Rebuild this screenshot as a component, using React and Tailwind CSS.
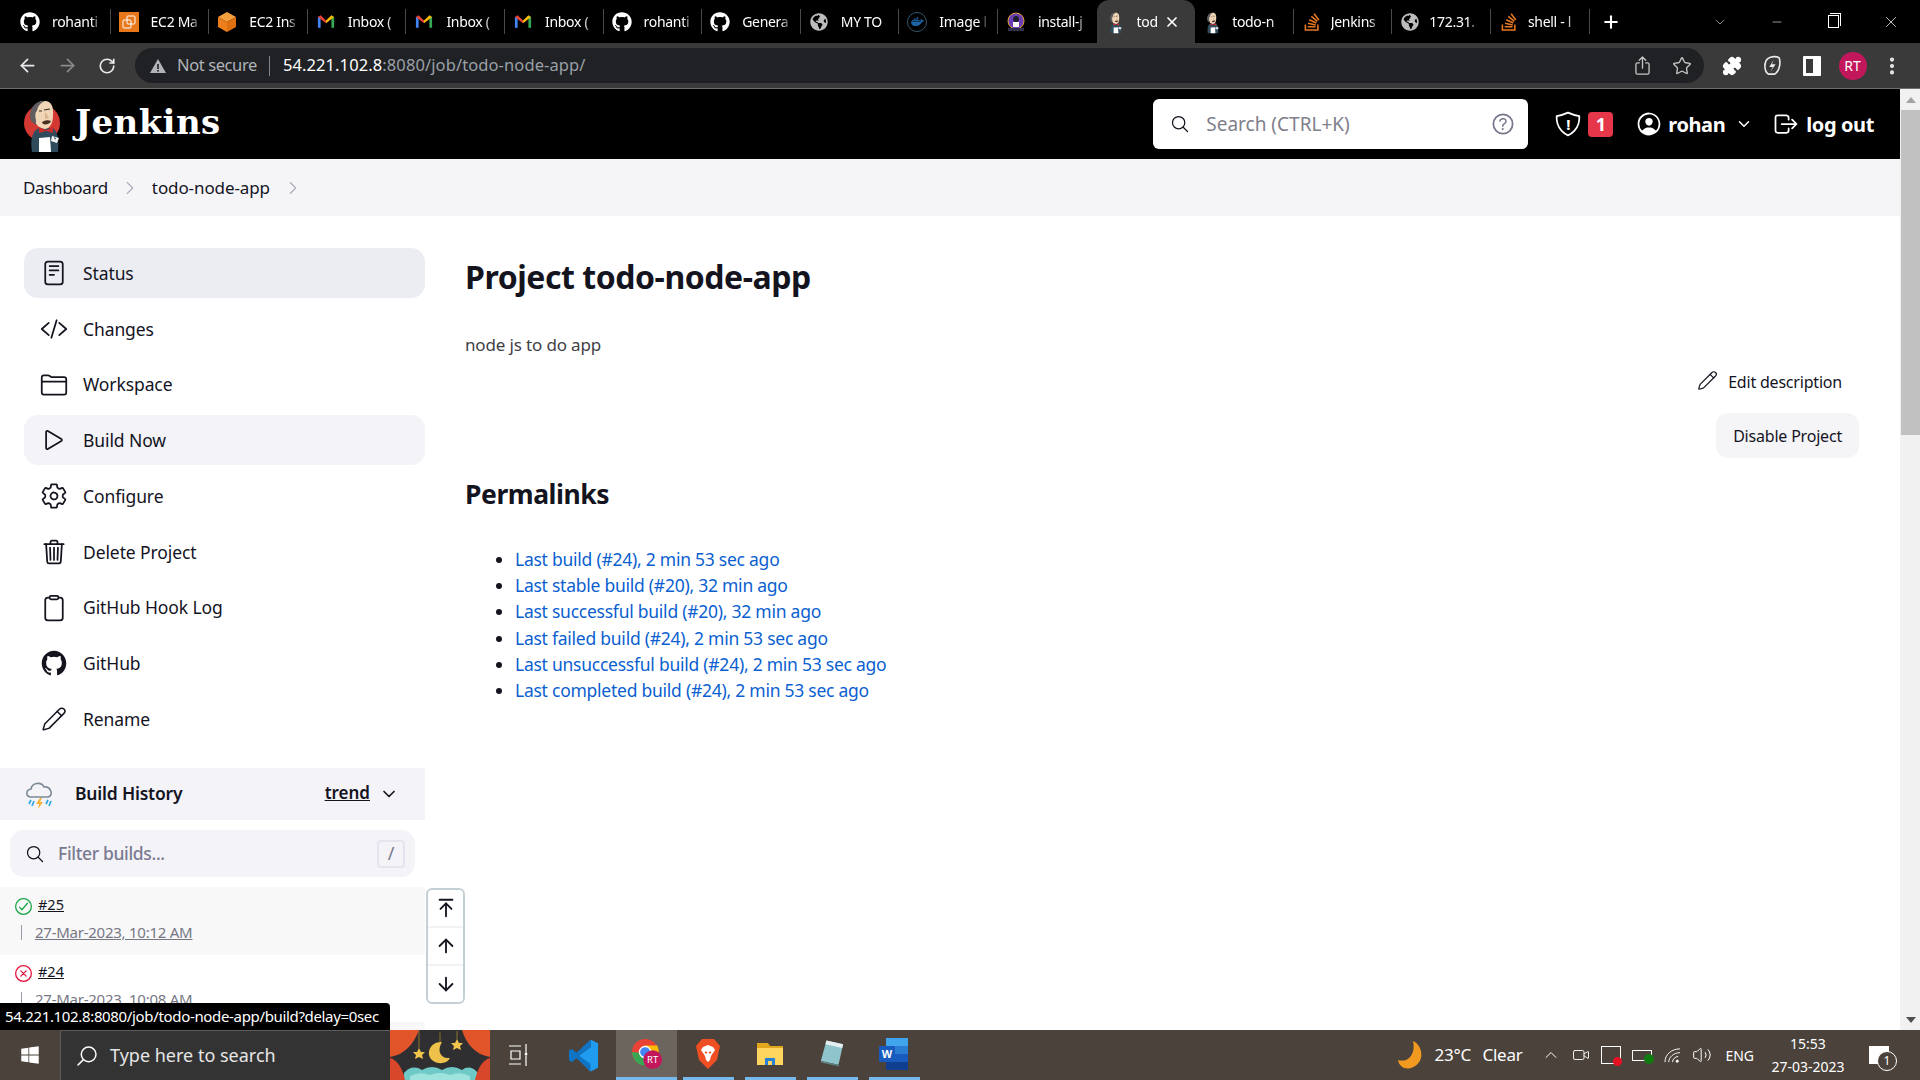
import {
  ArrowLeft, ArrowRight, RotateCw, Star, Plus, Minus, X, ChevronDown, ChevronRight, Puzzle, ArrowUpToLine, ArrowUp, ArrowDown,
  EllipsisVertical, ChevronUp, Video, Volume2, Pencil,
} from 'lucide-react';
import {
  IoReaderOutline, IoCodeSlashOutline, IoFolderOutline, IoPlayOutline, IoSettingsOutline, IoTrashOutline,
  IoClipboardOutline, IoLogoGithub, IoSearchOutline, IoHelpCircleOutline, IoPersonCircleOutline,
  IoLogOutOutline, IoCheckmarkCircleOutline, IoCloseCircleOutline, IoShieldOutline, IoShareOutline,
} from 'react-icons/io5';
import { FaGithub, FaStackOverflow, FaGlobeAmericas, FaDocker, FaWindows } from 'react-icons/fa';

const Butler = ({ className, circle = true }) => (
  <svg viewBox="0 0 60 60" className={className}>
    {circle && <circle cx="27" cy="29" r="18" fill="#d33833" />}
    <path d="M17 58 C15 46 17 37 24 34 L38 34 C43 38 44 46 43 58 Z" fill="#2f4b5c" />
    <path d="M18 18 C18 10 24 7 30 7 C36 7 39 13 38 21 C38 28 36 34 30 35 C25 35 21 31 20 27 Z" fill="#f0d6b7" />
    <path d="M16 27 C13 17 18 7 30 7 C25 9 23 12 22 17 C20 18 20 22 21 26 L21 31 Z" fill="#5f5d5f" />
    <path d="M29 16 L35 15 M24 17 L27 17" stroke="#3b2b20" strokeWidth="1.2" />
    <path d="M30 18 L34 24 L30 25 Z" fill="#d9b48f" />
    <path d="M27 28 C30 26 34 26 36 27 C35 30 31 31 28 30 Z" fill="#4a2f22" />
    <path d="M24 33 L31 36 L38 33 L38 39 L31 37 L24 39 Z" fill="#cc2b2b" />
    <path d="M24 44 L35 43 L36 58 L24 58 Z" fill="#fff" />
    <path d="M37 42 L44 44 L42 49 L36 47 Z" fill="#f4f4f4" />
    <path d="M39 43 L41 44 L40 46 Z" fill="#2f4b5c" />
  </svg>
);

const GmailIcon = () => (
  <svg viewBox="0 0 20 16" className="w-[18px] h-[15px]">
    <path d="M1 15 L1 3 L4 3 L4 15 Z" fill="#4285f4" />
    <path d="M16 15 L16 3 L19 3 L19 15 Z" fill="#34a853" />
    <path d="M1 3 L4 1 L10 7 L10 10 Z" fill="#ea4335" />
    <path d="M19 3 L16 1 L10 7 L10 10 Z" fill="#fbbc04" />
  </svg>
);

const Ec2Square = () => (
  <svg viewBox="0 0 20 20" className="w-[20px] h-[20px]">
    <rect width="20" height="20" fill="#e8761a" />
    <rect x="8" y="4" width="8" height="8" rx="1" fill="none" stroke="#fff" strokeWidth="1" />
    <rect x="4" y="8" width="8" height="8" rx="1" fill="none" stroke="#fff" strokeWidth="1" />
  </svg>
);

const Cube = () => (
  <svg viewBox="0 0 20 20" className="w-[20px] h-[20px]">
    <path d="M10 0 L19 5 L10 10 L1 5 Z" fill="#f6a03d" />
    <path d="M1 5 L10 10 L10 20 L1 15 Z" fill="#ec7f1c" />
    <path d="M19 5 L10 10 L10 20 L19 15 Z" fill="#e0700f" />
  </svg>
);

const InstallIcon = () => (
  <svg viewBox="0 0 20 20" className="w-[20px] h-[20px]">
    <circle cx="10" cy="9" r="8" fill="#6b3fb5" stroke="#e0a030" strokeWidth="1" />
    <circle cx="10" cy="7" r="3" fill="#1e1e2a" />
    <rect x="7" y="10" width="6" height="5" fill="#fff" />
    <rect x="2" y="16" width="16" height="3" fill="#30304a" />
  </svg>
);

const tabs = [
  { label: 'rohanti', icon: <FaGithub className="text-white w-[20px] h-[20px]" /> },
  { label: 'EC2 Ma', icon: <Ec2Square /> },
  { label: 'EC2 Ins', icon: <Cube /> },
  { label: 'Inbox (', icon: <GmailIcon /> },
  { label: 'Inbox (', icon: <GmailIcon /> },
  { label: 'Inbox (', icon: <GmailIcon /> },
  { label: 'rohanti', icon: <FaGithub className="text-white w-[20px] h-[20px]" /> },
  { label: 'Genera', icon: <FaGithub className="text-white w-[20px] h-[20px]" /> },
  { label: 'MY TO', icon: <FaGlobeAmericas className="text-[#bdbdbd] w-[18px] h-[18px]" /> },
  {
    label: 'Image l',
    icon: (
      <span className="w-[20px] h-[20px] rounded-full border border-[#36566b] flex items-center justify-center">
        <FaDocker className="text-[#1d63a8] w-[13px] h-[13px]" />
      </span>
    ),
  },
  { label: 'install-j', icon: <InstallIcon /> },
  { label: 'tod', icon: <Butler className="w-[26px] h-[26px]" circle={false} />, active: true },
  { label: 'todo-n', icon: <Butler className="w-[26px] h-[26px]" circle={false} /> },
  { label: 'Jenkins', icon: <FaStackOverflow className="text-[#e87922] w-[20px] h-[20px]" /> },
  { label: '172.31.', icon: <FaGlobeAmericas className="text-[#bdbdbd] w-[18px] h-[18px]" /> },
  { label: 'shell - l', icon: <FaStackOverflow className="text-[#e87922] w-[20px] h-[20px]" /> },
];

const sideItems = [
  { label: 'Status', icon: IoReaderOutline, cls: 'bg-[#ecedf2]' },
  { label: 'Changes', icon: IoCodeSlashOutline },
  { label: 'Workspace', icon: IoFolderOutline },
  { label: 'Build Now', icon: IoPlayOutline, cls: 'bg-[#f3f3f8]' },
  { label: 'Configure', icon: IoSettingsOutline },
  { label: 'Delete Project', icon: IoTrashOutline },
  { label: 'GitHub Hook Log', icon: IoClipboardOutline },
  { label: 'GitHub', icon: IoLogoGithub },
  { label: 'Rename', icon: Pencil, thin: true },
];

const permalinks = [
  'Last build (#24), 2 min 53 sec ago',
  'Last stable build (#20), 32 min ago',
  'Last successful build (#20), 32 min ago',
  'Last failed build (#24), 2 min 53 sec ago',
  'Last unsuccessful build (#24), 2 min 53 sec ago',
  'Last completed build (#24), 2 min 53 sec ago',
];

const TabBar = () => (
  <div className="h-[43px] bg-black flex items-stretch pl-[12px] shrink-0">
    {tabs.map((tab, i) => (
      <div
        key={i}
        className={
          tab.active
            ? 'w-[98.6px] h-[43px] bg-[#3a3a3a] rounded-t-[12px] flex items-center pl-[9px] gap-[9px] text-white'
            : i > 11
              ? 'w-[98.6px] h-[43px] flex items-center pl-[8px] gap-[7px] text-white relative'
              : 'w-[98.6px] h-[43px] flex items-center pl-[8px] gap-[10px] text-white relative'
        }
      >
        <span className="w-[24px] h-[24px] flex items-center justify-center shrink-0 -ml-[2px]">{tab.icon}</span>
        <span className="text-[14px] tracking-[-0.3px] whitespace-nowrap overflow-hidden w-[50px] [mask-image:linear-gradient(to_right,#000_78%,transparent)]">{tab.label}</span>
        {tab.active && <X className="w-[16px] h-[16px] -ml-[32px] shrink-0" strokeWidth={2.5} />}
        {!tab.active && !tabs[i + 1]?.active && (
          <span className="absolute right-0 top-[9px] h-[25px] w-px bg-[#4a4a4a]" />
        )}
      </div>
    ))}
    <div className="w-[42px] flex items-center justify-center text-white">
      <Plus className="w-[20px] h-[20px]" strokeWidth={2.5} />
    </div>
    <div className="ml-auto flex text-white">
      <div className="w-[57px] flex items-center justify-center">
        <ChevronDown className="w-[16px] h-[16px] text-[#c8c8c8]" strokeWidth={1} />
      </div>
      <div className="w-[57px] flex items-center justify-center">
        <Minus className="w-[14px] h-[14px]" strokeWidth={1} />
      </div>
      <div className="w-[57px] flex items-center justify-center">
        <span className="relative w-[11px] h-[13px] border border-white block after:absolute after:content-[''] after:-top-[3px] after:-right-[3px] after:w-[11px] after:h-[13px] after:border-t after:border-r after:border-white" />
      </div>
      <div className="w-[58px] flex items-center justify-center">
        <X className="w-[18px] h-[18px]" strokeWidth={1} />
      </div>
    </div>
  </div>
);

const ToolBar = () => (
  <div className="h-[46px] bg-[#3a3a3a] border-b border-[#6e6e6e] flex items-center pl-[7px] shrink-0 text-[#e8eaed]">
    <div className="w-[40px] flex justify-center"><ArrowLeft className="w-[21px] h-[21px]" strokeWidth={2} /></div>
    <div className="w-[40px] flex justify-center"><ArrowRight className="w-[21px] h-[21px] text-[#8a8a8a]" strokeWidth={2} /></div>
    <div className="w-[40px] flex justify-center"><RotateCw className="w-[18px] h-[18px]" strokeWidth={2.2} /></div>
    <div className="ml-[8px] w-[1569px] h-[35px] rounded-full bg-[#202124] flex items-center pl-[15px] pr-[12px] text-[16.5px]">
      <svg viewBox="0 0 16 14" className="w-[16px] h-[14px] shrink-0">
        <path d="M8 0 L16 14 L0 14 Z" fill="#b0b3b8" />
        <rect x="7.2" y="5" width="1.6" height="5" fill="#202124" />
        <rect x="7.2" y="11" width="1.6" height="1.6" fill="#202124" />
      </svg>
      <span className="ml-[11px] text-[#b0b3b8] tracking-[-0.4px] whitespace-nowrap">Not secure</span>
      <span className="ml-[12px] w-px h-[20px] bg-[#80868b]" />
      <span className="ml-[13px] whitespace-nowrap tracking-[0.1px]">
        <span className="text-white">54.221.102.8</span>
        <span className="text-[#9aa0a6]">:8080/job/todo-node-app/</span>
      </span>
      <div className="ml-auto flex items-center gap-[19px] text-[#c4c7c5]">
        <IoShareOutline className="w-[21px] h-[21px]" />
        <Star className="w-[20px] h-[20px]" strokeWidth={1.6} />
      </div>
    </div>
    <div className="ml-[8px] w-[40px] flex justify-center"><Puzzle className="w-[20px] h-[20px] fill-white text-white" /></div>
    <div className="w-[40px] flex justify-center">
      <svg viewBox="0 0 20 24" className="w-[18px] h-[22px]" fill="none" stroke="#e8eaed" strokeWidth="1.8">
        <path d="M6 21 C1 18 1 8 5 4 C9 1 15 1 18 3 C20 9 18 18 13 21 Z" />
        <path d="M12 5 L7 13 L11 13 L8 19 L14 10 L10 10 Z" fill="#e8eaed" stroke="none" />
      </svg>
    </div>
    <div className="w-[40px] flex justify-center">
      <span className="w-[18px] h-[20px] border-[3px] border-white border-r-[8px] block rounded-[1px]" />
    </div>
    <div className="w-[40px] flex justify-center pl-[1px]">
      <span className="w-[28px] h-[28px] rounded-full bg-[#c2185b] text-white text-[14px] flex items-center justify-center">RT</span>
    </div>
    <div className="w-[40px] flex justify-center"><EllipsisVertical className="w-[22px] h-[22px]" strokeWidth={2.5} /></div>
  </div>
);

const JenkinsHeader = () => (
  <div className="h-[70px] bg-black flex items-center pl-[15px] pr-[26px] text-white shrink-0">
    <Butler className="w-[60px] h-[60px] shrink-0" />
    <span className="font-['DejaVu_Serif',serif] font-bold text-[34px] tracking-[0.4px] leading-none -mt-[4px]">Jenkins</span>
    <div className="ml-auto w-[375px] h-[50px] bg-white rounded-[6px] flex items-center pl-[17px] pr-[11px] text-[#80808c]">
      <IoSearchOutline className="w-[20px] h-[20px] text-[#14141f]" />
      <span className="ml-[16px] mt-[1px] text-[19px]">Search (CTRL+K)</span>
      <IoHelpCircleOutline className="ml-auto w-[28px] h-[28px] text-[#77778c]" />
    </div>
    <span className="relative ml-[26px] w-[28px] h-[28px] flex items-center justify-center">
      <IoShieldOutline className="w-[28px] h-[28px]" />
      <span className="absolute text-[15px] font-bold leading-none">!</span>
    </span>
    <span className="ml-[6px] w-[25px] h-[25px] rounded-[4px] bg-[#e6364a] text-[18px] font-bold flex items-center justify-center">1</span>
    <IoPersonCircleOutline className="ml-[22px] w-[28px] h-[28px]" />
    <span className="ml-[5px] mt-[1px] text-[20px] font-bold tracking-[-0.4px]">rohan</span>
    <ChevronDown className="ml-[10px] w-[18px] h-[18px]" strokeWidth={2} />
    <IoLogOutOutline className="ml-[19px] w-[28px] h-[28px]" />
    <span className="ml-[6px] mt-[1px] text-[20px] font-bold tracking-[-0.4px] whitespace-nowrap">log out</span>
  </div>
);

const Breadcrumb = () => (
  <div className="h-[57px] bg-[#f5f5f8] flex items-center pl-[23px] text-[17px] tracking-[-0.35px] text-[#14141f] shrink-0">
    <span>Dashboard</span>
    <ChevronRight className="mx-[11px] w-[22px] h-[22px] text-[#a9a9bd]" strokeWidth={1.2} />
    <span className="tracking-[-0.1px]">todo-node-app</span>
    <ChevronRight className="ml-[12px] w-[22px] h-[22px] text-[#a9a9bd]" strokeWidth={1.2} />
  </div>
);

const BuildRow = ({ num, date, ok, shade }) => (
  <div className={shade ? 'h-[68px] bg-[#f8f8f9] pl-[13px] pt-[7px]' : 'h-[67px] pl-[13px] pt-[6px]'}>
    <div className="flex items-center h-[22px] mt-[1px]">
      {ok ? (
        <IoCheckmarkCircleOutline className="w-[21px] h-[21px] text-[#1ea64b]" />
      ) : (
        <IoCloseCircleOutline className="w-[21px] h-[21px] text-[#e6143c]" />
      )}
      <span className="ml-[4px] text-[14.5px] underline text-[#14141f] -mt-[3px]">{num}</span>
    </div>
    <div className="flex items-center mt-[7px] h-[16px] pl-[8px]">
      <span className="w-px h-[15px] bg-[#9a9aa8]" />
      <span className="ml-[13px] text-[15px] tracking-[-0.25px] underline text-[#777784] whitespace-nowrap">{date}</span>
    </div>
  </div>
);

const Sidebar = () => (
  <aside className="w-[425px] shrink-0 pt-[32px]">
    <nav className="pl-[24px]">
      {sideItems.map((item) => {
        const Icon = item.icon;
        return (
          <div key={item.label} className={`h-[50px] mb-[5.75px] rounded-[14px] flex items-center text-[#14141f] ${item.cls || ''}`}>
            <span className="w-[59px] flex justify-center">
              {item.thin ? <Icon className="w-[26px] h-[26px]" strokeWidth={1.4} /> : <Icon className="w-[28px] h-[28px]" />}
            </span>
            <span className="text-[17.5px] tracking-[-0.1px]">{item.label}</span>
          </div>
        );
      })}
    </nav>
    <div className="mt-[24px] h-[52px] bg-[#f3f3f8] flex items-center pl-[25px] text-[#14141f]">
      <svg viewBox="0 0 30 30" className="w-[30px] h-[30px] shrink-0">
        <path d="M6 18 C1 18 0 11 6 10 C7 4 16 2 19 8 C26 7 29 17 23 18 Z" fill="none" stroke="#7d8a96" strokeWidth="1.6" />
        <path d="M15 19 L11 25 L14 25 L13 30 L18 23 L15 23 L17 19 Z" fill="#f5b335" />
        <path d="M6 21 L4 25 M9 22 L7 27 M23 21 L21 25 M26 22 L24 27" stroke="#2fa8e0" strokeWidth="1.7" />
      </svg>
      <span className="ml-[20px] -mt-[2px] text-[17.5px] font-semibold tracking-[-0.2px]">Build History</span>
      <span className="ml-auto -mt-[2px] text-[17px] font-semibold underline">trend</span>
      <ChevronDown className="ml-[9px] mr-[26px] w-[20px] h-[20px]" strokeWidth={2} />
    </div>
    <div className="mt-[10px] mx-[10px] h-[47px] bg-[#f3f3f8] rounded-[14px] flex items-center pl-[15px] pr-[10px]">
      <IoSearchOutline className="w-[20px] h-[20px] text-[#14141f]" />
      <span className="ml-[13px] text-[17.5px] tracking-[-0.35px] font-medium text-[#7a7a90]">Filter builds...</span>
      <span className="ml-auto w-[28px] h-[28px] rounded-[4px] border-2 border-[#e4e4ee] text-[#77778c] flex items-center justify-center text-[18px]">/</span>
    </div>
    <div className="mt-[10px]">
      <BuildRow num="#25" date="27-Mar-2023, 10:12 AM" ok shade />
      <BuildRow num="#24" date="27-Mar-2023, 10:08 AM" />
      <div className="h-[68px] bg-[#f8f8f9]" />
    </div>
  </aside>
);

const Content = () => (
  <main className="flex-1 pl-[40px] pr-[41px] pt-[39px] text-[#14141f]">
    <h1 className="text-[32px] leading-[44px] font-bold tracking-[-0.45px]">Project todo-node-app</h1>
    <p className="mt-[34px] text-[17px] leading-[24px] tracking-[-0.15px] text-[#3f3f46]">node js to do app</p>
    <div className="flex flex-col items-end">
      <div className="mt-[13px] h-[24px] flex items-center pr-[17px]">
        <Pencil className="w-[21px] h-[21px] -mt-[4px]" strokeWidth={1.4} />
        <span className="ml-[10px] text-[16px] tracking-[-0.2px]">Edit description</span>
      </div>
      <div className="mt-[19px] h-[45px] px-[17px] rounded-[12px] bg-[#f5f5f8] flex items-center text-[16px] tracking-[-0.2px]">Disable Project</div>
    </div>
    <h2 className="mt-[19px] text-[26.5px] leading-[34px] font-bold tracking-[-0.45px]">Permalinks</h2>
    <ul className="mt-[35px] list-disc pl-[50px] text-[17.5px] leading-[26.2px] tracking-[-0.25px]">
      {permalinks.map((link) => (
        <li key={link}><span className="text-[#0b5fd0]">{link}</span></li>
      ))}
    </ul>
  </main>
);

const Wallpaper = () => (
  <svg viewBox="0 0 100 50" className="w-[100px] h-[50px] shrink-0">
    <rect width="100" height="50" fill="#2f2f31" />
    <path d="M13 0 V18 M29 0 V18 M50 0 V12 M67 0 V9" stroke="#b8922e" strokeWidth="0.7" />
    <path d="M14 43 Q22 34 32 40 Q42 34 52 40 Q62 34 72 40 Q80 34 88 43 L88 50 L14 50 Z" fill="#6fc9c6" />
    <path d="M20 46 Q30 41 40 45 Q50 41 60 45 Q70 41 80 46 L80 50 L20 50 Z" fill="#9ee3dd" />
    <path d="M0 0 L29 0 C24 14 14 25 0 27 Z" fill="#e2552b" />
    <path d="M100 0 L72 0 C76 14 86 25 100 27 Z" fill="#e2552b" />
    <path d="M0 28 C8 30 13 40 15 50 L0 50 Z" fill="#d9472a" />
    <path d="M100 28 C92 30 87 40 85 50 L100 50 Z" fill="#d9472a" />
    <path d="M29 0 Q50 5 72 0 Z" fill="#2f2f31" />
    <path d="M52 12 C41 11 35 23 42 30 C48 35 57 34 60 28 C52 29 46 22 52 12 Z" fill="#eec14a" />
    <path d="M29 18 L31 22 L35 22 L32 25 L33 29 L29 27 L25 29 L26 25 L23 22 L27 22 Z" fill="#f2c64b" />
    <path d="M67 9 L69 13 L73 13 L70 16 L71 20 L67 18 L63 20 L64 16 L61 13 L65 13 Z" fill="#f2c64b" />
  </svg>
);

const TaskItem = ({ children, active }) => (
  <div
    className={
      active
        ? 'w-[61px] h-[50px] bg-[#6b655e] border-b-[3px] border-[#76b9ed] flex items-center justify-center shrink-0'
        : 'w-[51px] h-[50px] mx-[5.5px] border-b-[3px] border-[#76b9ed] flex items-center justify-center shrink-0'
    }
  >
    {children}
  </div>
);

const TaskBar = () => (
  <div className="h-[50px] bg-[#4a423b] flex items-stretch text-white shrink-0">
    <div className="w-[60px] flex items-center justify-center">
      <FaWindows className="w-[20px] h-[20px]" />
    </div>
    <div className="w-[330px] bg-[#333333] border-l border-t border-[#5c5c5c] flex items-center pl-[14px]">
      <IoSearchOutline className="w-[24px] h-[24px] -scale-x-100" />
      <span className="ml-[11px] text-[18px] text-[#e6e6e6]">Type here to search</span>
    </div>
    <Wallpaper />
    <div className="w-[58px] flex items-center justify-center shrink-0">
      <svg viewBox="0 0 20 24" className="w-[20px] h-[24px]" fill="none" stroke="#fff" strokeWidth="1.2">
        <path d="M0 3 H12 M0 21 H12 M2 8 H11 V16 H2 Z M17 1 V9 M17 13 V23" />
        <rect x="15.8" y="9.5" width="2.4" height="3" fill="#fff" stroke="none" />
      </svg>
    </div>
    <div className="w-[68px] flex items-center justify-center shrink-0 pl-[3px]">
      <svg viewBox="0 0 32 36" className="w-[30px] h-[35px]">
        <path d="M23 1 L31 5 L31 31 L23 35 L8 20 L23 9 Z" fill="#1f9cf0" />
        <path d="M23 9 L8 20 L3 25 L0 23 L0 13 L3 11 L8 15 L23 1 Z" fill="#0f74c4" />
        <path d="M23 27 L8 16 L3 11 L0 13 L0 23 L3 25 L8 21 L23 35 Z" fill="#0f74c4" />
      </svg>
    </div>
    <TaskItem active>
      <svg viewBox="0 0 34 34" className="w-[32px] h-[32px]">
        <circle cx="15" cy="15" r="14" fill="#ea4335" />
        <path d="M3 22 A14 14 0 0 0 15 29 L21 18 L10 16 Z" fill="#34a853" />
        <path d="M1 15 A14 14 0 0 0 3 22 L10 16 Z" fill="#34a853" />
        <path d="M28 8 A14 14 0 0 1 29 17 L15 29 L20 15 L15 8 Z" fill="#fbbc04" />
        <circle cx="15" cy="15" r="6" fill="#4285f4" stroke="#fff" strokeWidth="1.5" />
        <circle cx="23" cy="23" r="10" fill="#c2185b" />
        <text x="23" y="27" textAnchor="middle" fontSize="10" fill="#fff" fontFamily="Noto Sans, sans-serif">RT</text>
      </svg>
    </TaskItem>
    <TaskItem>
      <svg viewBox="0 0 26 32" className="w-[26px] h-[32px]">
        <path d="M7 1 H19 L25 8 L22 22 L13 31 L4 22 L1 8 Z" fill="#f04e23" />
        <path d="M8 9 L13 7 L18 9 L20 12 L16 18 L15 22 L13 24 L11 22 L10 18 L6 12 Z" fill="#fff" />
        <path d="M10 14 L12 15 M16 14 L14 15" stroke="#f04e23" strokeWidth="1.5" />
      </svg>
    </TaskItem>
    <TaskItem>
      <svg viewBox="0 0 28 28" className="w-[28px] h-[28px]">
        <path d="M1 3 H12 L14 6 H27 V25 H1 Z" fill="#e2a71c" />
        <rect x="1" y="8" width="26" height="17" fill="#fdd55f" />
        <path d="M9 18 H19 V25 H16 V21 H12 V25 H9 Z" fill="#2a7fd4" />
      </svg>
    </TaskItem>
    <TaskItem>
      <svg viewBox="0 0 28 32" className="w-[26px] h-[31px]">
        <path d="M8 2 L26 6 L21 28 L2 24 Z" fill="#8fc4cc" />
        <path d="M2 24 L21 28 L22 30 L3 26 Z" fill="#5f7f84" />
        <path d="M8 2 L26 6 L25 10 L7 6 Z" fill="#e6eef0" />
      </svg>
    </TaskItem>
    <TaskItem>
      <svg viewBox="0 0 30 34" className="w-[30px] h-[34px]">
        <rect x="7" y="1" width="22" height="8" fill="#41a5ee" />
        <rect x="7" y="9" width="22" height="8" fill="#2b7cd3" />
        <rect x="7" y="17" width="22" height="8" fill="#185abd" />
        <rect x="7" y="25" width="22" height="8" fill="#103f91" />
        <rect x="0" y="9" width="16" height="16" rx="1" fill="#185abd" />
        <text x="8" y="21" textAnchor="middle" fontSize="11" fontWeight="700" fill="#fff" fontFamily="Liberation Sans, sans-serif">W</text>
      </svg>
    </TaskItem>
    <div className="ml-auto flex items-center pr-[31px]">
      <svg viewBox="0 0 26 30" className="w-[26px] h-[30px] shrink-0">
        <path d="M15 1 C26 6 27 24 13 28 C6 30 1 26 0 20 C10 23 18 14 15 1 Z" fill="#f29a1f" />
      </svg>
      <span className="ml-[10px] w-[48px] text-[17px] tracking-[-0.2px] whitespace-nowrap">23°C</span>
      <span className="w-[59px] text-[17px] tracking-[-0.2px]">Clear</span>
      <ChevronUp className="w-[20px] h-[20px]" strokeWidth={1.2} />
      <Video className="ml-[11px] w-[18px] h-[18px]" strokeWidth={1.2} />
      <span className="relative ml-[11px] w-[20px] h-[18px] border border-white block">
        <span className="absolute -right-[2px] -bottom-[3px] w-[9px] h-[9px] rounded-full bg-[#e81123]" />
      </span>
      <span className="relative ml-[11px] w-[20px] h-[11px] border border-white block">
        <span className="absolute -right-[3px] -bottom-[4px] w-[10px] h-[10px] rounded-full bg-[#107c10]" />
      </span>
      <svg viewBox="0 0 18 18" className="ml-[12px] w-[17px] h-[17px]" fill="none" stroke="#fff" strokeWidth="1">
        <path d="M1 16 C1 8 8 2 17 2 M5 16 C5 11 10 6 17 6 M9 16 C9 13 12 10 15 10" />
        <circle cx="14" cy="15" r="1.2" fill="#fff" />
      </svg>
      <Volume2 className="ml-[11px] w-[20px] h-[20px]" strokeWidth={1.2} />
      <span className="ml-[13px] text-[14px]">ENG</span>
      <div className="ml-[14px] w-[80px] flex flex-col items-center text-[14px] leading-[23px]">
        <span>15:53</span>
        <span>27-03-2023</span>
      </div>
      <span className="relative ml-[21px] w-[20px] h-[18px] bg-white block">
        <span className="absolute -right-[8px] -bottom-[7px] w-[20px] h-[20px] rounded-full bg-[#4a423b] border border-white text-[12px] leading-[18px] text-center">1</span>
      </span>
    </div>
  </div>
);

const Scrollbar = () => (
  <div className="w-[20px] bg-[#f1f1f1] pl-[1px] flex flex-col shrink-0 items-stretch">
    <div className="h-[21px] flex items-center justify-center">
      <span className="w-0 h-0 border-x-[5px] border-x-transparent border-b-[6px] border-b-[#a3a3a3]" />
    </div>
    <div className="h-[325px] bg-[#c1c1c1]" />
    <div className="flex-1" />
    <div className="h-[21px] flex items-center justify-center">
      <span className="w-0 h-0 border-x-[5px] border-x-transparent border-t-[6px] border-t-[#505050]" />
    </div>
  </div>
);

export default function App() {
  return (
    <div className="relative w-[1920px] h-[1080px] overflow-hidden flex flex-col bg-white font-['Noto_Sans',sans-serif]">
      <TabBar />
      <ToolBar />
      <div className="flex-1 min-h-0 flex">
        <div className="flex-1 min-w-0 flex flex-col overflow-hidden">
          <JenkinsHeader />
          <Breadcrumb />
          <div className="flex-1 min-h-0 flex overflow-hidden">
            <Sidebar />
            <Content />
          </div>
        </div>
        <Scrollbar />
      </div>
      <TaskBar />

      {/* floating scroll buttons */}
      <div className="absolute left-[426px] top-[888px] w-[39px] h-[116px] bg-white border-2 border-[#c5d0d6] rounded-[6px] flex flex-col text-[#14141f]">
        <div className="flex-1 flex items-center justify-center border-b-2 border-[#f0f2f4]"><ArrowUpToLine className="w-[22px] h-[22px]" strokeWidth={2} /></div>
        <div className="flex-1 flex items-center justify-center border-b-2 border-[#f0f2f4]"><ArrowUp className="w-[22px] h-[22px]" strokeWidth={2} /></div>
        <div className="flex-1 flex items-center justify-center"><ArrowDown className="w-[22px] h-[22px]" strokeWidth={2} /></div>
      </div>

      {/* link status bubble */}
      <div className="absolute left-0 top-[1003px] w-[390px] h-[27px] bg-black text-white rounded-tr-[4px] flex items-center pl-[5px] text-[15px] tracking-[-0.34px] whitespace-nowrap">
        54.221.102.8:8080/job/todo-node-app/build?delay=0sec
      </div>
    </div>
  );
}
